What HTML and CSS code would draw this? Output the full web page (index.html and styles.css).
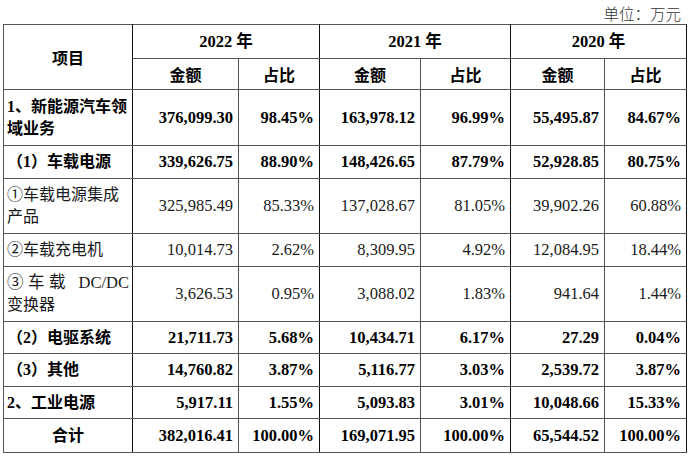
FILE: index.html
```html
<!DOCTYPE html>
<html lang="zh">
<head>
<meta charset="utf-8">
<link rel="stylesheet" href="styles.css">
</head>
<body>
<div class="page">
  <div class="unit">单位：万元</div>
  <table class="data">
    <colgroup>
      <col class="c-item"><col class="c-a1"><col class="c-p1"><col class="c-a2"><col class="c-p2"><col class="c-a3"><col class="c-p3">
    </colgroup>
    <thead>
      <tr class="h-year">
        <th rowspan="2" class="item-head g">项目</th>
        <th colspan="2" class="g">2022 年</th>
        <th colspan="2" class="g">2021 年</th>
        <th colspan="2" class="g">2020 年</th>
      </tr>
      <tr class="h-sub">
        <th>金额</th><th class="g">占比</th>
        <th>金额</th><th class="g">占比</th>
        <th>金额</th><th class="g">占比</th>
      </tr>
    </thead>
    <tbody>
      <tr class="r56 bold">
        <td class="name g">1、新能源汽车领域业务</td>
        <td>376,099.30</td><td class="g">98.45%</td>
        <td>163,978.12</td><td class="g">96.99%</td>
        <td>55,495.87</td><td class="g">84.67%</td>
      </tr>
      <tr class="r33 bold">
        <td class="name g">（1）车载电源</td>
        <td>339,626.75</td><td class="g">88.90%</td>
        <td>148,426.65</td><td class="g">87.79%</td>
        <td>52,928.85</td><td class="g">80.75%</td>
      </tr>
      <tr class="r55">
        <td class="name g">①车载电源集成产品</td>
        <td>325,985.49</td><td class="g">85.33%</td>
        <td>137,028.67</td><td class="g">81.05%</td>
        <td>39,902.26</td><td class="g">60.88%</td>
      </tr>
      <tr class="r33">
        <td class="name g">②车载充电机</td>
        <td>10,014.73</td><td class="g">2.62%</td>
        <td>8,309.95</td><td class="g">4.92%</td>
        <td>12,084.95</td><td class="g">18.44%</td>
      </tr>
      <tr class="r55">
        <td class="name g"><span class="jl">③车载 DC/DC</span>变换器</td>
        <td>3,626.53</td><td class="g">0.95%</td>
        <td>3,088.02</td><td class="g">1.83%</td>
        <td>941.64</td><td class="g">1.44%</td>
      </tr>
      <tr class="r32 bold">
        <td class="name g">（2）电驱系统</td>
        <td>21,711.73</td><td class="g">5.68%</td>
        <td>10,434.71</td><td class="g">6.17%</td>
        <td>27.29</td><td class="g">0.04%</td>
      </tr>
      <tr class="r33 bold">
        <td class="name g">（3）其他</td>
        <td>14,760.82</td><td class="g">3.87%</td>
        <td>5,116.77</td><td class="g">3.03%</td>
        <td>2,539.72</td><td class="g">3.87%</td>
      </tr>
      <tr class="r32 bold">
        <td class="name g">2、工业电源</td>
        <td>5,917.11</td><td class="g">1.55%</td>
        <td>5,093.83</td><td class="g">3.01%</td>
        <td>10,048.66</td><td class="g">15.33%</td>
      </tr>
      <tr class="r34 bold">
        <td class="name total g">合计</td>
        <td>382,016.41</td><td class="g">100.00%</td>
        <td>169,071.95</td><td class="g">100.00%</td>
        <td>65,544.52</td><td class="g">100.00%</td>
      </tr>
    </tbody>
  </table>
</div>
</body>
</html>
```
FILE: styles.css
```css
html, body {
  margin: 0;
  padding: 0;
  background: #fff;
}
body {
  font-family: "Liberation Serif", "Noto Sans CJK SC", serif;
  font-size: 16px;
  color: #1a1a1a;
}
.page {
  padding: 0 0 0 3px;
}
.unit {
  height: 24px;
  line-height: 27px;
  text-align: right;
  padding-right: 11px;
  color: #333;
  font-family: "Noto Sans CJK SC", sans-serif;
  font-weight: 300;
  font-size: 15.5px;
}
.data {
  border-collapse: collapse;
  table-layout: fixed;
  width: 684px;
  border: 1px solid #111;
}
.c-item { width: 129px; }
.c-a1 { width: 106px; }
.c-p1 { width: 81px; }
.c-a2 { width: 101px; }
.c-p2 { width: 90px; }
.c-a3 { width: 94px; }
.c-p3 { width: 82px; }
.data th, .data td {
  border: 1px solid #555;
  padding: 0 5px 0 3px;
  line-height: 22px;
  vertical-align: middle;
}
.data .g {
  border-right-color: #111;
}
.data th {
  font-weight: 700;
  color: #000;
  text-align: center;
  padding: 0;
  font-size: 16.5px;
}
.data td {
  text-align: right;
  font-size: 16.5px;
}
.data td.name {
  text-align: left;
  font-size: 16px;
  font-family: "Liberation Serif", "Noto Sans CJK SC", serif;
  font-weight: 400;
  padding-left: 3px;
  padding-right: 3px;
}
.data tr.bold td {
  font-weight: 700;
  color: #000;
}
.jl {
  display: block;
  text-align: justify;
  text-align-last: justify;
  text-justify: inter-character;
  font-size: 16.5px;
}
.data td.name.total {
  text-align: center;
}
.data .item-head {
  font-family: "Noto Sans CJK SC", sans-serif;
  font-size: 16px;
}
.h-sub th {
  font-family: "Noto Sans CJK SC", sans-serif;
  font-size: 16px;
}
.h-year { height: 34px; }
.h-sub { height: 31px; }
.r56 { height: 56px; }
.r55 { height: 55px; }
.r34 { height: 34px; }
.r33 { height: 33px; }
.r32 { height: 32px; }
```
